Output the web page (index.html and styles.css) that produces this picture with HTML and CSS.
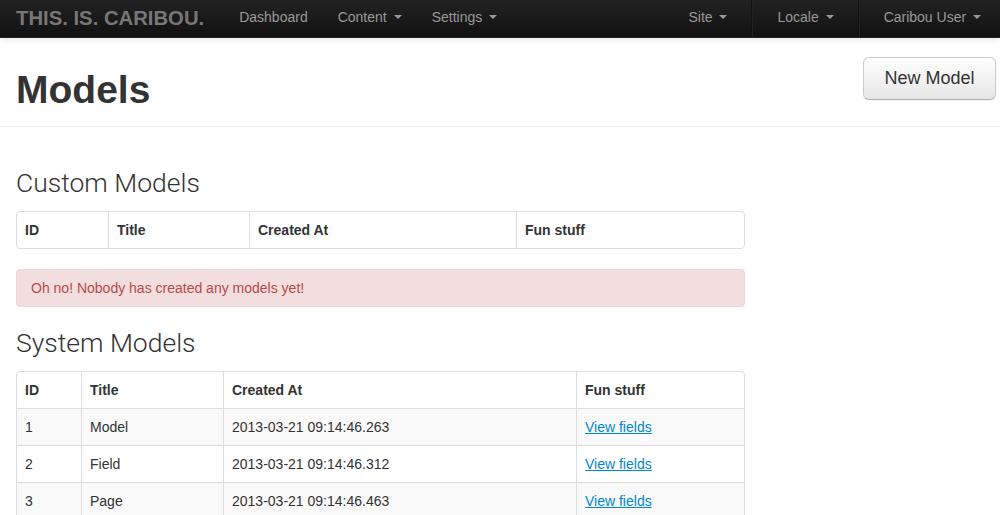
FILE: index.html
```html
<!DOCTYPE html>
<html>
<head>
<meta charset="utf-8">
<title>Models</title>
<link rel="stylesheet" href="styles.css">
</head>
<body>
<div class="navbar">
  <a class="brand">THIS. IS. CARIBOU.</a>
  <ul class="nav">
    <li><a>Dashboard</a></li>
    <li><a>Content <b class="caret"></b></a></li>
    <li><a>Settings <b class="caret"></b></a></li>
  </ul>
  <ul class="nav nav-right">
    <li><a>Site <b class="caret"></b></a></li>
    <li class="divider"></li>
    <li><a>Locale <b class="caret"></b></a></li>
    <li class="divider"></li>
    <li><a>Caribou User <b class="caret"></b></a></li>
  </ul>
</div>

<div class="page-header">
  <h1>Models</h1>
  <a class="btn">New Model</a>
</div>

<div class="content">
  <h2>Custom Models</h2>
  <table class="table t1">
    <thead>
      <tr><th class="c1">ID</th><th class="c2">Title</th><th class="c3">Created At</th><th class="c4">Fun stuff</th></tr>
    </thead>
  </table>
  <div class="alert">Oh no! Nobody has created any models yet!</div>

  <h2>System Models</h2>
  <table class="table t2 striped">
    <thead>
      <tr><th class="c1">ID</th><th class="c2">Title</th><th class="c3">Created At</th><th class="c4">Fun stuff</th></tr>
    </thead>
    <tbody>
      <tr><td>1</td><td>Model</td><td>2013-03-21 09:14:46.263</td><td><a href="#">View fields</a></td></tr>
      <tr><td>2</td><td>Field</td><td>2013-03-21 09:14:46.312</td><td><a href="#">View fields</a></td></tr>
      <tr><td>3</td><td>Page</td><td>2013-03-21 09:14:46.463</td><td><a href="#">View fields</a></td></tr>
    </tbody>
  </table>
</div>
</body>
</html>
```

FILE: styles.css
```css
* { box-sizing: border-box; }
html, body { margin: 0; padding: 0; }
body {
  font-family: "Liberation Sans", Arial, sans-serif;
  font-size: 14px;
  line-height: 20px;
  color: #333;
  background: #fff;
  overflow: hidden;
}

.navbar {
  display: flex;
  align-items: stretch;
  height: 38px;
  background: linear-gradient(to bottom, #222 0%, #111 100%);
  border-bottom: 1px solid #252525;
  box-shadow: 0 1px 6px rgba(0,0,0,0.12);
  position: relative;
  z-index: 2;
  padding: 0 4px 0 16px;
}
.brand {
  font-size: 20.3px;
  font-weight: bold;
  color: #777;
  line-height: 36px;
  padding-right: 20px;
}
.nav {
  display: flex;
  list-style: none;
  margin: 0;
  padding: 0;
}
.nav li a {
  display: block;
  padding: 0 15px;
  line-height: 35px;
  color: #999;
  font-size: 14px;
  text-decoration: none;
}
.nav-right { margin-left: auto; }
.divider {
  width: 2px;
  margin: 0 9px;
  border-left: 1px solid #111;
  border-right: 1px solid #222;
}
.caret {
  display: inline-block;
  width: 0;
  height: 0;
  vertical-align: middle;
  margin-left: 3px;
  margin-top: -2px;
  border-top: 4px solid #999;
  border-left: 4px solid transparent;
  border-right: 4px solid transparent;
}

.page-header {
  display: flex;
  justify-content: space-between;
  align-items: flex-start;
  padding: 19px 4px 15px 16px;
  border-bottom: 1px solid #eee;
}
.page-header h1 {
  margin: 11px 0 0;
  font-size: 39px;
  line-height: 43px;
  font-weight: bold;
  color: #333;
}
.btn {
  display: inline-block;
  font-size: 18px;
  line-height: 21px;
  padding: 10px 20.5px;
  color: #333;
  background: linear-gradient(to bottom, #fff 0%, #e6e6e6 100%);
  border: 1px solid #ccc;
  border-bottom-color: #b3b3b3;
  border-radius: 6px;
  box-shadow: inset 0 1px 0 rgba(255,255,255,.2), 0 1px 2px rgba(0,0,0,.05);
}

.content {
  width: 745px;
  padding: 20px 0 0 16px;
}
.content h2 {
  font-family: Roboto, "Liberation Sans", sans-serif;
  font-weight: 300;
  font-size: 26.5px;
  line-height: 36px;
  margin: 18px 0 10px;
  color: #333;
}
.table {
  width: 100%;
  border: 1px solid #ddd;
  border-collapse: separate;
  border-spacing: 0;
  border-radius: 4px;
  margin-bottom: 20px;
}
.table th, .table td {
  padding: 8px;
  line-height: 20px;
  text-align: left;
  vertical-align: top;
  border-left: 1px solid #ddd;
}
.table th:first-child, .table td:first-child { border-left: 0; }
.table td { border-top: 1px solid #ddd; }
.table th { font-weight: bold; }
.striped tbody tr:nth-child(odd) td { background: #f9f9f9; }

.t1 .c1 { width: 91px; }
.t1 .c2 { width: 141px; }
.t1 .c3 { width: 267px; }
.t2 .c1 { width: 64px; }
.t2 .c2 { width: 142px; }
.t2 .c3 { width: 353px; }

.table a { color: #0088cc; text-decoration: underline; }

.alert {
  background: #f2dede;
  border: 1px solid #eed3d7;
  color: #b94a48;
  border-radius: 4px;
  padding: 8px 35px 8px 14px;
  line-height: 20px;
}
```
